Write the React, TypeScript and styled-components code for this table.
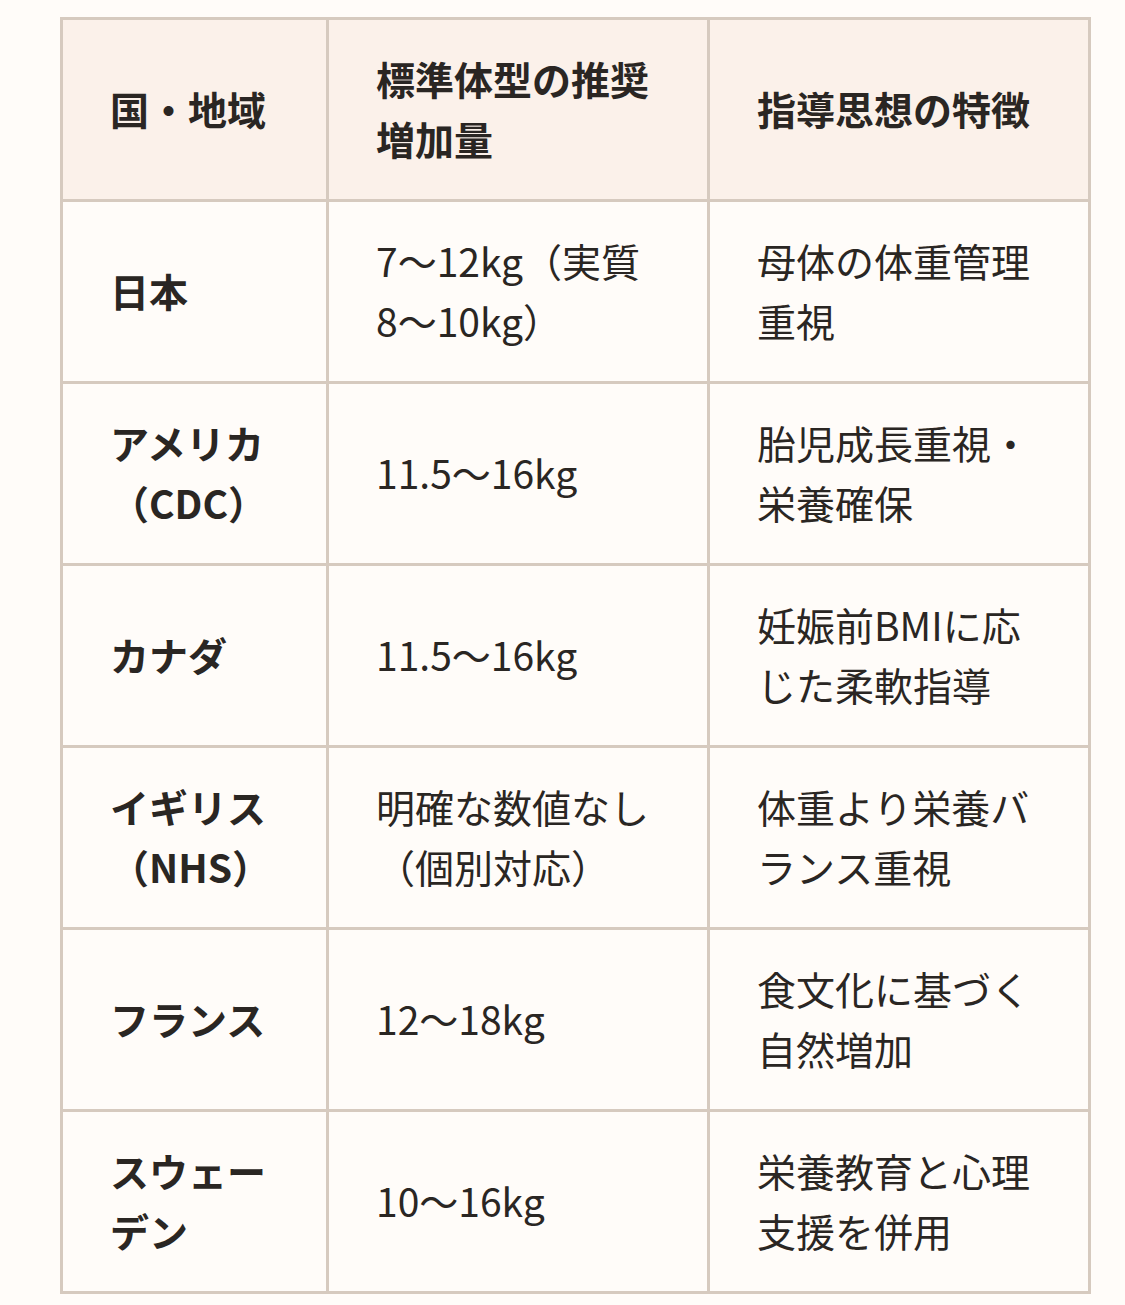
import styled, { createGlobalStyle } from "styled-components";

const GlobalStyle = createGlobalStyle`
  html, body {
    margin: 0;
    padding: 0;
    background: #fffcf9;
  }
  body {
    font-family: "Noto Sans CJK JP", "Noto Sans", sans-serif;
    color: #2a2623;
  }
`;

const Page = styled.div`
  padding: 17px 0 12px 60px;
`;

const Table = styled.table`
  width: 1028px;
  border-collapse: collapse;
  table-layout: fixed;
  font-size: 39px;
  line-height: 60px;
`;

const HeadCell = styled.th`
  background: #fbf1ea;
  border: 3px solid #d6cabf;
  padding: 28px 46px 31px 47px;
  text-align: left;
  font-weight: 700;
  vertical-align: middle;
`;

const Cell = styled.td<{ $strong?: boolean }>`
  background: #fffcf9;
  border: 3px solid #d6cabf;
  padding: 28px 46px 31px 47px;
  font-weight: ${(p) => (p.$strong ? 700 : 400)};
  vertical-align: middle;
`;

const rows: [string, string, string][] = [
  ["日本", "7〜12kg（実質8〜10kg）", "母体の体重管理重視"],
  ["アメリカ（CDC）", "11.5〜16kg", "胎児成長重視・栄養確保"],
  ["カナダ", "11.5〜16kg", "妊娠前BMIに応じた柔軟指導"],
  ["イギリス（NHS）", "明確な数値なし（個別対応）", "体重より栄養バランス重視"],
  ["フランス", "12〜18kg", "食文化に基づく自然増加"],
  ["スウェーデン", "10〜16kg", "栄養教育と心理支援を併用"],
];

export default function App() {
  return (
    <>
      <GlobalStyle />
      <Page>
        <Table>
          <colgroup>
            <col style={{ width: 266 }} />
            <col style={{ width: 381 }} />
            <col style={{ width: 381 }} />
          </colgroup>
          <thead>
            <tr>
              <HeadCell>国・地域</HeadCell>
              <HeadCell>標準体型の推奨増加量</HeadCell>
              <HeadCell>指導思想の特徴</HeadCell>
            </tr>
          </thead>
          <tbody>
            {rows.map(([region, gain, policy]) => (
              <tr key={region}>
                <Cell $strong>{region}</Cell>
                <Cell>{gain}</Cell>
                <Cell>{policy}</Cell>
              </tr>
            ))}
          </tbody>
        </Table>
      </Page>
    </>
  );
}
